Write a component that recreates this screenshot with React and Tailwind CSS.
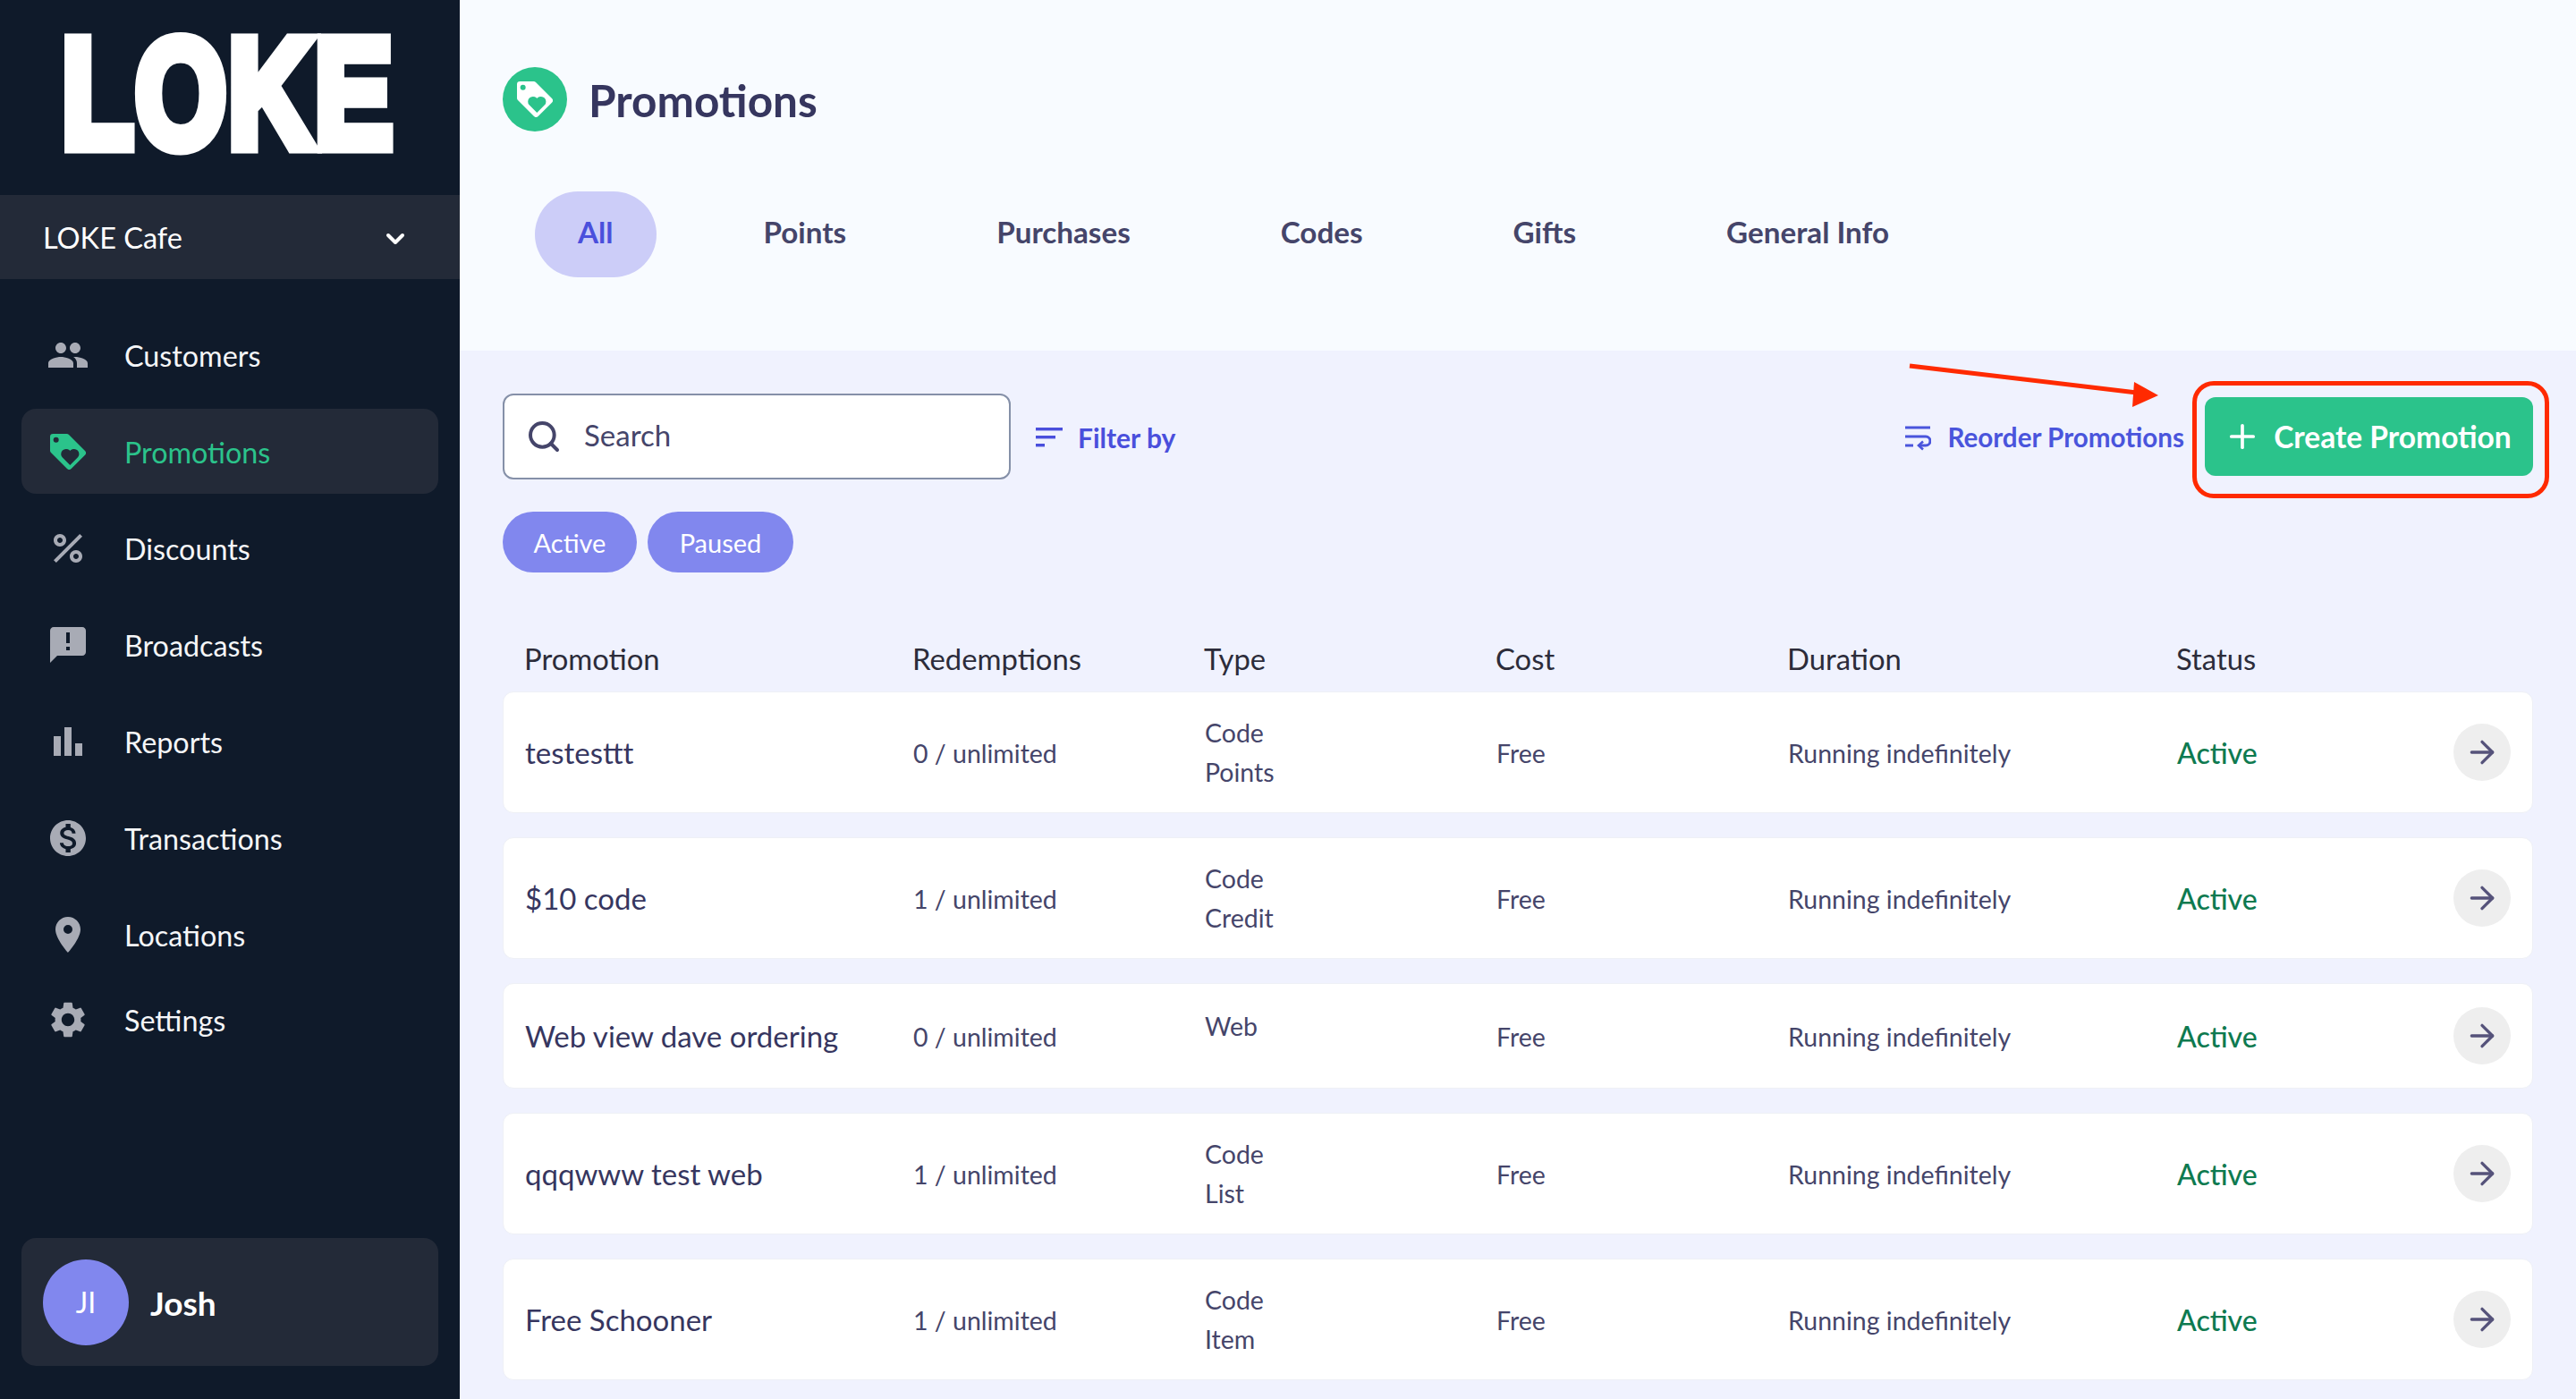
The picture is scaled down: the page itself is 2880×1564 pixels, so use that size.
import React from "react";
import { MdPeople, MdPercent, MdAnnouncement, MdBarChart, MdMonetizationOn, MdPlace, MdSettings } from "react-icons/md";
import { ChevronDown, Plus, ArrowRight, Search } from "lucide-react";

function Tag({ className, fill, cut, heart }) {
  return (
    <svg viewBox="0 0 24 24" className={className}>
      <path fill={fill} d="M2 0h9.2a2 2 0 0 1 1.4.6l10.8 10.8a2 2 0 0 1 0 2.8l-9.2 9.2a2 2 0 0 1-2.8 0L.6 12.6A2 2 0 0 1 0 11.2V2a2 2 0 0 1 2-2z" />
      <circle cx="4" cy="4" r="1.8" fill={cut} />
      <path fill={heart} d="M13.4 21l-5.2-5.2a3.4 3.4 0 0 1 4.8-4.8l.4.4.4-.4a3.4 3.4 0 0 1 4.8 4.8z" />
    </svg>
  );
}

const nav = [
  { label: "Customers", icon: <MdPeople className="w-[48px] h-[48px] shrink-0" /> },
  { label: "Promotions", active: true, icon: <Tag className="w-[40px] h-[40px] shrink-0" fill="#2bc38b" cut="#232a38" heart="#232a38" /> },
  { label: "Discounts", icon: <MdPercent className="w-[48px] h-[48px] shrink-0" /> },
  { label: "Broadcasts", icon: <MdAnnouncement className="w-[48px] h-[48px] shrink-0" /> },
  { label: "Reports", icon: <MdBarChart className="w-[48px] h-[48px] shrink-0" /> },
  { label: "Transactions", icon: <MdMonetizationOn className="w-[48px] h-[48px] shrink-0" /> },
  { label: "Locations", icon: <MdPlace className="w-[48px] h-[48px] shrink-0" /> },
  { label: "Settings", icon: <MdSettings className="w-[48px] h-[48px] shrink-0" />, tight: true },
];

const tabs = ["All", "Points", "Purchases", "Codes", "Gifts", "General Info"];

const rows = [
  { name: "testesttt", red: "0 / unlimited", type: ["Code", "Points"], h: "h-[136px]" },
  { name: "$10 code", red: "1 / unlimited", type: ["Code", "Credit"], h: "h-[136px]" },
  { name: "Web view dave ordering", red: "0 / unlimited", type: ["Web"], h: "h-[118px]", up: true },
  { name: "qqqwww test web", red: "1 / unlimited", type: ["Code", "List"], h: "h-[136px]" },
  { name: "Free Schooner", red: "1 / unlimited", type: ["Code", "Item"], h: "h-[136px]" },
];

const cols = "grid grid-cols-[434px_326px_326px_326px_435px_1fr_64px] items-center";

export default function App() {
  return (
    <div className="flex w-[2880px] h-[1564px] overflow-hidden font-['Lato','Liberation_Sans',sans-serif]">
      <aside className="w-[514px] shrink-0 h-full bg-[#0f1a2a] flex flex-col">
        <div className="h-[218px] shrink-0 pl-[60px] pt-[1px]">
          <svg width="440" height="200" viewBox="0 -20 579 200" preserveAspectRatio="none" className="block">
            <text x="12" y="143" fontFamily="Liberation Sans" fontWeight="700" fontSize="172" letterSpacing="3" fill="#fff" stroke="#fff" strokeWidth="15" strokeLinejoin="miter">LOKE</text>
          </svg>
        </div>
        <div className="h-[94px] shrink-0 bg-[#232a38] flex items-center justify-between pl-[48px] pr-[56px] text-white text-[32.5px]">
          <span className="pt-[2px]">LOKE Cafe</span>
          <ChevronDown className="w-[32px] h-[32px] mt-[3px]" strokeWidth={3} />
        </div>
        <nav className="mt-[37px] mx-[24px] flex flex-col gap-[13px]">
          {nav.map((n) => (
            <div key={n.label} className={`h-[95px] flex items-center pl-[32px] rounded-[16px] text-[32.3px] ${n.active ? "bg-[#232a38] text-[#2bc38b]" : "text-[#f5f6f8]"} ${n.tight ? "-mt-[13px]" : ""}`}>
              <span className={`w-[40px] flex justify-center ${n.active ? "" : "text-[#a8abb5]"}`}>{n.icon}</span>
              <span className="ml-[43px] pt-[3px]">{n.label}</span>
            </div>
          ))}
        </nav>
        <div className="mt-auto mb-[37px] mx-[24px] h-[143px] rounded-[16px] bg-[#232a38] flex items-center pl-[24px]">
          <div className="w-[96px] h-[96px] rounded-full bg-[#8187ee] flex items-center justify-center text-white text-[32px]">JI</div>
          <span className="ml-[24px] pt-[3px] text-white text-[37px] font-bold">Josh</span>
        </div>
      </aside>

      <main className="flex-1 min-w-0 h-full bg-[#f0f2fe] flex flex-col">
        <header className="h-[392px] shrink-0 bg-[#f8fbff] pl-[48px] pt-[75px]">
          <div className="flex items-center h-[72px]">
            <div className="w-[72px] h-[72px] rounded-full bg-[#2bc38b] flex items-center justify-center">
              <Tag className="w-[40px] h-[40px]" fill="#fff" cut="#2bc38b" heart="#2bc38b" />
            </div>
            <h1 className="ml-[24px] pt-[3px] text-[49.5px] font-bold text-[#36365f]">Promotions</h1>
          </div>
          <div className="mt-[67px] ml-[36px] flex gap-[72px]">
            {tabs.map((t, i) => (
              <div key={t} className={`h-[96px] px-[48px] pb-[4px] rounded-[48px] flex items-center text-[33.2px] font-bold ${i === 0 ? "bg-[#cccdf8] text-[#4a4fdc]" : "text-[#45456a]"}`}>{t}</div>
            ))}
          </div>
        </header>

        <section className="relative flex-1 pl-[48px] pr-[48px]">
          <div className="flex items-center pt-[48px]">
            <div className="w-[568px] h-[96px] bg-white border-2 border-[#8590a8] rounded-[12px] flex items-center pl-[24px] text-[#45456a] text-[33px]">
              <Search className="w-[40px] h-[40px]" strokeWidth={2.4} />
              <span className="ml-[25px] pb-[2px]">Search</span>
            </div>
            <div className="ml-[28px] pt-[2px] flex items-center text-[#4a4fdc] text-[30px] font-bold">
              <svg viewBox="0 0 30 24" className="w-[30px] h-[24px]" fill="#4a4fdc"><rect width="30" height="3.4" y="1" /><rect width="22" height="3.4" y="10" /><rect width="10" height="3.4" y="19" /></svg>
              <span className="ml-[17px]">Filter by</span>
            </div>
            <div className="ml-auto mr-[23px] pt-[2px] flex items-center text-[#4a55dc] text-[29.6px] font-bold">
              <svg viewBox="0 0 30 30" className="w-[30px] h-[30px]" fill="none" stroke="#4a55dc" strokeWidth="3">
                <path d="M1 4h28M1 14h23a5 5 0 0 1 0 10h-8M1 24h9" />
                <path d="M21 19.5l-5 4.5 5 4.5" strokeWidth="2.6" />
              </svg>
              <span className="ml-[18px]">Reorder Promotions</span>
            </div>
            <button className="w-[367px] h-[88px] pr-[3px] rounded-[12px] bg-[#2bc38b] text-white flex items-center justify-center text-[33.5px] font-bold">
              <Plus className="w-[42px] h-[42px]" strokeWidth={2.1} />
              <span className="ml-[14px] pt-[1px]">Create Promotion</span>
            </button>
          </div>

          <div className="mt-[36px] flex gap-[12px]">
            <div className="h-[68px] w-[150px] pt-[2px] rounded-[34px] bg-[#8187ee] text-white text-[29px] flex items-center justify-center">Active</div>
            <div className="h-[68px] w-[163px] pt-[2px] rounded-[34px] bg-[#8187ee] text-white text-[29px] flex items-center justify-center">Paused</div>
          </div>

          <div className={`${cols} mt-[69px] h-[64px] px-[24px] pb-[8px] text-[32.8px] text-[#2c2c3a]`}>
            <span>Promotion</span><span>Redemptions</span><span>Type</span><span>Cost</span><span>Duration</span><span>Status</span><span />
          </div>

          <div className="flex flex-col gap-[27px]">
            {rows.map((r) => (
              <div key={r.name} className={`${cols} ${r.h} px-[24px] bg-white rounded-[12px] border border-[#eef0f6]`}>
                <span className="pt-[2px] text-[33px] text-[#36365f]">{r.name}</span>
                <span className="pt-[2px] text-[28.5px] text-[#45456a]">{r.red}</span>
                <div className={`text-[28.5px] leading-[44px] text-[#45456a] ${r.up ? "-mt-[22px]" : ""}`}>
                  {r.type.map((t) => <div key={t}>{t}</div>)}
                </div>
                <span className="pt-[2px] text-[28.5px] text-[#45456a]">Free</span>
                <span className="pt-[2px] text-[28.5px] text-[#45456a]">Running indefinitely</span>
                <span className="pt-[2px] text-[32px] font-medium text-[#0e7a50]">Active</span>
                <div className="w-[64px] h-[64px] rounded-full bg-[#eeeeee] flex items-center justify-center text-[#55527a]">
                  <ArrowRight className="w-[40px] h-[40px]" strokeWidth={2} />
                </div>
              </div>
            ))}
          </div>

          <div className="absolute left-[1937px] top-[34px] w-[399px] h-[131px] border-[5px] border-[#ff2a00] rounded-[24px]" />
          <svg className="absolute left-[1585px] top-0 w-[340px] h-[70px]" viewBox="0 0 340 70">
            <line x1="36" y1="17" x2="290" y2="47" stroke="#ff2a00" strokeWidth="5" />
            <polygon points="314,50 287,35 285,63" fill="#ff2a00" />
          </svg>
        </section>
      </main>
    </div>
  );
}
